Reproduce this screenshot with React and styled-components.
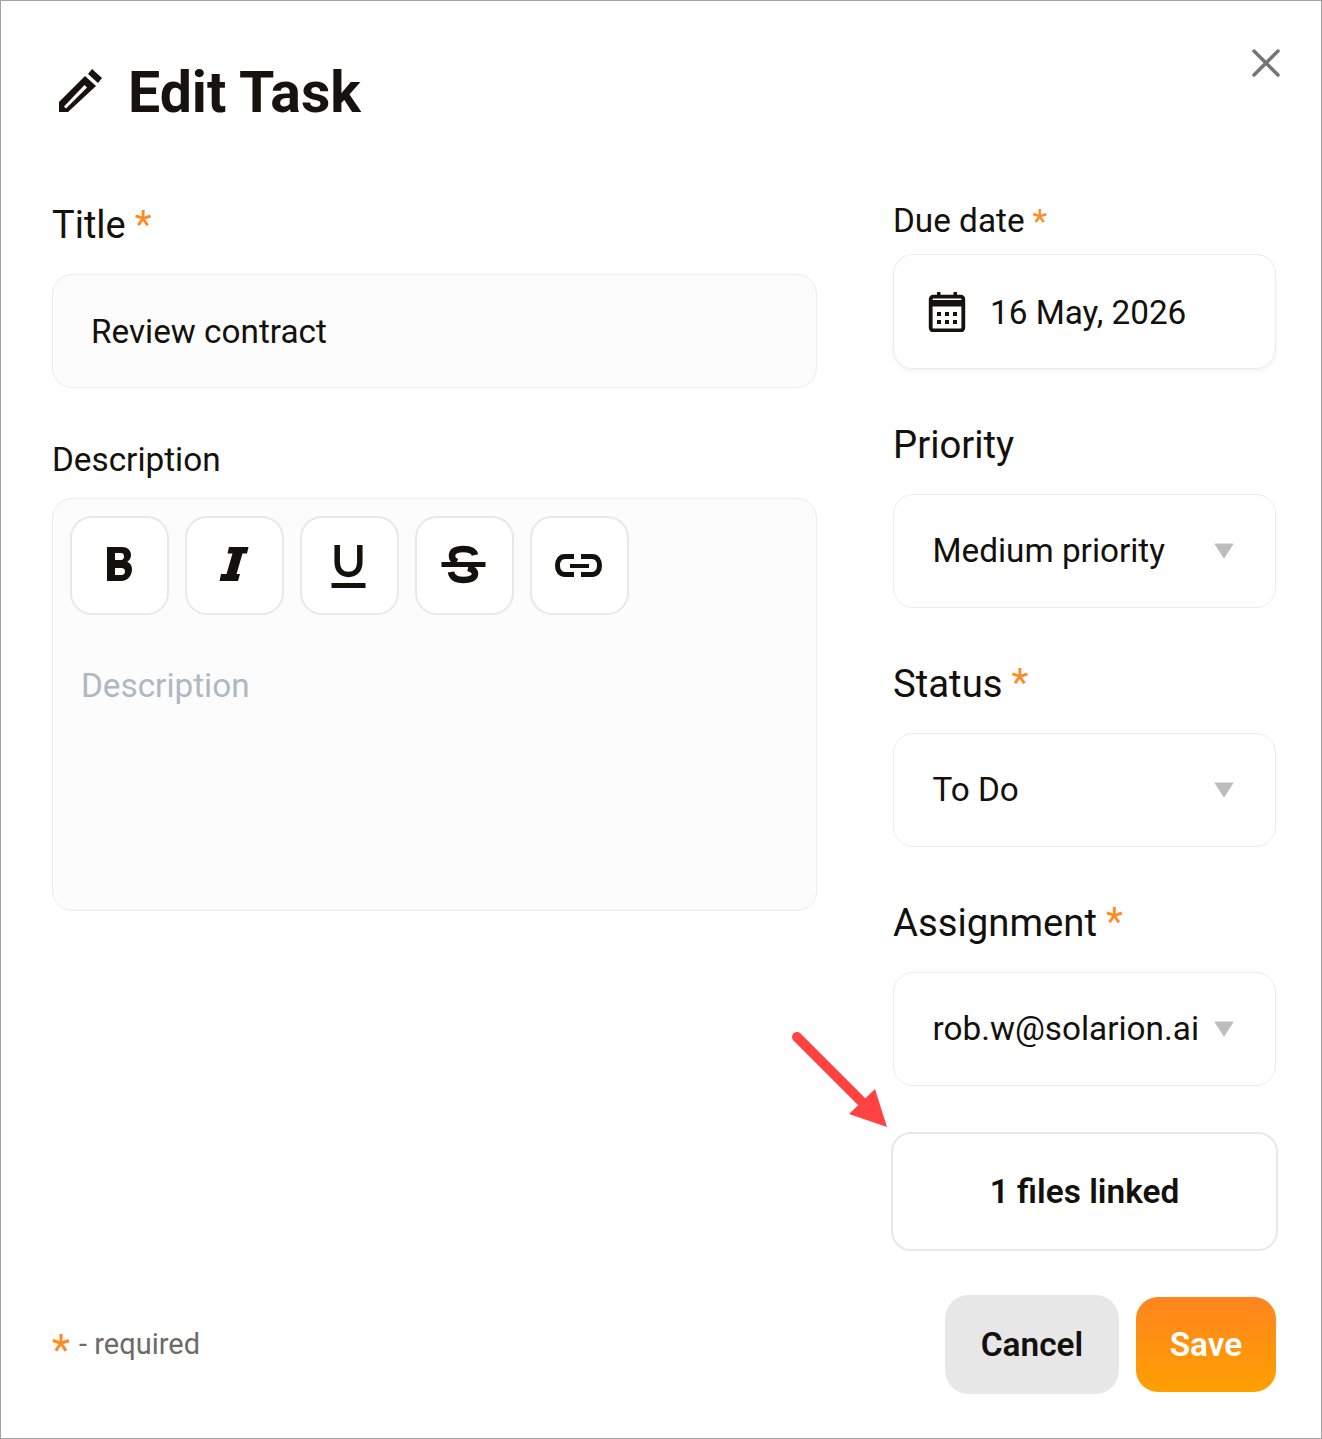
import React from 'react';
import styled, { createGlobalStyle } from 'styled-components';

const GlobalStyle = createGlobalStyle`
  * { box-sizing: border-box; }
  html, body { margin: 0; padding: 0; background: #fff; }
  body { font-family: Roboto, "Liberation Sans", sans-serif; color: #14100c; }
`;

const Modal = styled.div`
  position: relative;
  width: 1322px;
  height: 1439px;
  padding: 50px 45px 0 51px;
  background: #fff;
  border: 1px solid #a3a3a3;
`;

const CloseButton = styled.button`
  position: absolute;
  top: 46px;
  right: 39px;
  width: 32px;
  height: 32px;
  padding: 0;
  border: 0;
  background: none;
  display: flex;
`;

const Header = styled.header`
  display: flex;
  align-items: center;
  gap: 24px;
  height: 80px;
  padding-left: 6px;
  margin-bottom: 69px;
`;

const Heading = styled.h1`
  margin: 2px 0 0;
  font-size: 57.2px;
  font-weight: 700;
  color: #17120d;
`;

const Columns = styled.div`
  display: grid;
  grid-template-columns: 765px 383px;
  column-gap: 76px;
`;

const Column = styled.div`
  display: flex;
  flex-direction: column;
`;

const Label = styled.label`
  display: flex;
  align-items: center;
  gap: ${(p) => p.$gap || 9}px;
  height: ${(p) => p.$height}px;
  padding-bottom: ${(p) => (p.$lift ? 1 : 0)}px;
  margin-top: ${(p) => p.$top || 0}px;
  margin-bottom: ${(p) => p.$bottom}px;
  font-size: ${(p) => p.$size}px;
  font-weight: 400;
`;

const Star = styled.span`
  color: #ff8a1f;
  font-size: ${(p) => p.$size || 39}px;
  line-height: 1;
  margin-top: ${(p) => p.$shift ?? 0}px;
`;

const TitleInput = styled.input`
  display: block;
  width: 100%;
  height: 114px;
  padding: 1px 38px 0;
  font: 400 33.3px Roboto, sans-serif;
  color: #14100c;
  background: #fcfcfc;
  border: 1px solid #ececec;
  border-radius: 20px;
  outline: none;
`;

const Editor = styled.div`
  height: 413px;
  padding: 17px 17px 0 16.5px;
  background: #fcfcfc;
  border: 1px solid #ececec;
  border-radius: 20px;
  display: flex;
  flex-direction: column;
`;

const Toolbar = styled.div`
  display: flex;
  gap: 16px;
`;

const ToolButton = styled.button`
  width: 99px;
  height: 99px;
  padding: 0;
  display: flex;
  align-items: center;
  justify-content: center;
  background: #fff;
  border: 2px solid #e8e8e8;
  border-radius: 22px;
`;

const DescriptionArea = styled.textarea`
  flex: 1;
  margin-top: 52px;
  padding: 0 0 0 11.5px;
  border: 0;
  resize: none;
  outline: none;
  background: transparent;
  font: 400 33.3px Roboto, sans-serif;
  line-height: 38px;
  &::placeholder {
    color: #aeb8c4;
    opacity: 1;
  }
`;

const Control = styled.div`
  display: flex;
  align-items: center;
  height: ${(p) => p.$height || 114}px;
  padding: 0 41px 1px 38.5px;
  font-size: 33.3px;
  background: #fff;
  border: 1px solid #ececec;
  border-radius: 20px;
  box-shadow: ${(p) => (p.$raised ? '0 2px 4px rgba(0, 0, 0, 0.05)' : 'none')};
`;

const DateControl = styled(Control)`
  padding: 0 41px 0 34px;
  gap: 24px;
`;

const DateValue = styled.span`
  margin-top: 2px;
`;

const SelectValue = styled.span`
  flex: 1;
  white-space: nowrap;
`;

const Caret = styled.svg`
  width: 20px;
  height: 16px;
  flex: none;
  margin-top: 1px;
`;

const FilesButton = styled.button`
  display: block;
  width: 387px;
  height: 119px;
  margin: 46px -2px 0;
  font: 600 33.4px Roboto, sans-serif;
  color: #14100c;
  background: #fff;
  border: 2px solid #e8e8e8;
  border-radius: 20px;
`;

const Footer = styled.footer`
  display: flex;
  align-items: center;
  justify-content: space-between;
  height: 99px;
  margin-top: 44px;
`;

const RequiredNote = styled.div`
  display: flex;
  align-items: center;
  gap: 9px;
  padding-bottom: 2px;
  font-size: 29px;
  color: #6f6a66;
`;

const Actions = styled.div`
  display: flex;
  align-items: center;
  gap: 17px;
`;

const CancelButton = styled.button`
  width: 174px;
  height: 99px;
  font: 600 33.4px Roboto, sans-serif;
  color: #14100c;
  background: #e7e7e7;
  border: 0;
  border-radius: 24px;
`;

const SaveButton = styled.button`
  width: 140px;
  height: 95px;
  font: 600 33.4px Roboto, sans-serif;
  color: #fff;
  background: linear-gradient(180deg, #ff851f 0%, #ff9f00 100%);
  border: 0;
  border-radius: 22px;
`;

const Arrow = styled.svg`
  position: absolute;
  left: 789px;
  top: 1029px;
  width: 100px;
  height: 100px;
`;

const PencilIcon = () => (
  <svg width="46" height="44" viewBox="0 0 46 44">
    <path
      fill="#17120d"
      fillRule="evenodd"
      d="M34 0l10 9-4 5-10-9zM27 7l11 10-28 26H1V33zM6 37.5l2 2L29 18.5l-2.5-2.5z"
    />
  </svg>
);

const CalendarIcon = () => (
  <svg width="38" height="40" viewBox="0 0 38 40" style={{ flex: 'none' }}>
    <path fill="#17120d" d="M9 0h3.5v5H9zM25.5 0H29v5h-3.5z" />
    <rect x="2.7" y="4.7" width="32.6" height="33.6" rx="2.5" fill="none" stroke="#17120d" strokeWidth="3.8" />
    <path fill="#17120d" d="M2 8h34v6.500H2z" />
    <path
      fill="#17120d"
      d="M9 20h4v4H9zM17 20h4v4h-4zM25 20h4v4h-4zM9 28h4v4H9zM17 28h4v4h-4zM25 28h4v4h-4z"
    />
  </svg>
);

const toolIcons = {
  bold: (
    <path
      fill="#14100c"
      fillRule="evenodd"
      d="M18 6h15c5.500 0 9 3.300 9 8 0 3-1.400 5.300-3.800 6.700 3 1.300 4.800 3.900 4.800 7.300 0 6.800-4.500 12-10.500 12H18zM26 12v7h6c2 0 3-1.500 3-3.500S34 12 32 12zM26 27v7h6.500c2.200 0 3.500-1.400 3.500-3.500S34.700 27 32.500 27z"
    />
  ),
  italic: <path fill="#14100c" d="M25 6h19.500L43 12.500h-4.500L32.500 33H36l-2 7H15.500l1.500-7h5.500l6-20.500h-5z" />,
  underline: (
    <g>
      <path d="M18.200 4v17c0 8 4.500 12.500 11.300 12.500S40.800 29 40.800 21V4" fill="none" stroke="#14100c" strokeWidth="5.500" />
      <path fill="#14100c" d="M12.500 42h34v5h-34z" />
    </g>
  ),
  strike: (
    <g>
      <path
        d="M41 14c-1-4-5-6-11.500-6C23 8 18 10 18 15c0 3 2 5 5 6M34 27c5 1 7 3 7 6 0 4-5 6-11.500 6C23 39 18 37 17 31"
        fill="none"
        stroke="#14100c"
        strokeWidth="6.500"
      />
      <path fill="#14100c" d="M7.500 21h44v5h-44z" />
    </g>
  ),
  link: (
    <g fill="none" stroke="#14100c" strokeWidth="5">
      <path d="M25 15.500h-9c-5 0-7.500 3.500-7.500 9s2.500 9 7.500 9h9" />
      <path d="M32 15.500h11c5 0 7.500 3.500 7.500 9s-2.500 9-7.500 9H32" />
      <path d="M21 25h19" strokeWidth="4" />
    </g>
  ),
};

const ToolIcon = ({ name }) => (
  <svg width="60" height="50" viewBox="0 0 60 50">
    {toolIcons[name]}
  </svg>
);

const CaretIcon = () => (
  <Caret viewBox="0 0 20 16">
    <path fill="#bdbdbd" stroke="#bdbdbd" strokeWidth="1" strokeLinejoin="round" d="M1 1h18L10 15z" />
  </Caret>
);

const Select = ({ value }) => (
  <Control>
    <SelectValue>{value}</SelectValue>
    <CaretIcon />
  </Control>
);

export default function App() {
  return (
    <>
      <GlobalStyle />
      <Modal>
        <CloseButton type="button" aria-label="Close">
          <svg width="32" height="32" viewBox="0 0 32 32">
            <path d="M4 4l24 24M28 4L4 28" stroke="#757575" strokeWidth="3.500" strokeLinecap="round" />
          </svg>
        </CloseButton>

        <Header>
          <PencilIcon />
          <Heading>Edit Task</Heading>
        </Header>

        <Columns>
          <Column>
            <Label $height={50} $bottom={24} $size={38}>
              Title <Star>*</Star>
            </Label>
            <TitleInput defaultValue="Review contract" />
            <Label $height={44} $top={50} $bottom={16} $size={33.3} $lift>
              Description
            </Label>
            <Editor>
              <Toolbar>
                {Object.keys(toolIcons).map((name) => (
                  <ToolButton type="button" key={name}>
                    <ToolIcon name={name} />
                  </ToolButton>
                ))}
              </Toolbar>
              <DescriptionArea placeholder="Description" />
            </Editor>
          </Column>

          <Column>
            <Label $height={40} $bottom={14} $size={33.3} $gap={8}>
              Due date <Star $size={34} $shift={1}>*</Star>
            </Label>
            <DateControl $height={115} $raised>
              <CalendarIcon />
              <DateValue>16 May, 2026</DateValue>
            </DateControl>
            <Label $height={50} $top={51} $bottom={24} $size={38.3} $lift>
              Priority
            </Label>
            <Select value="Medium priority" />
            <Label $height={50} $top={51} $bottom={24} $size={38.3} $lift>
              Status <Star>*</Star>
            </Label>
            <Select value="To Do" />
            <Label $height={50} $top={51} $bottom={24} $size={38.3} $lift>
              Assignment <Star>*</Star>
            </Label>
            <Select value="rob.w@solarion.ai" />
            <FilesButton type="button">1 files linked</FilesButton>
          </Column>
        </Columns>

        <Footer>
          <RequiredNote>
            <Star $size={42} $shift={12}>*</Star>- required
          </RequiredNote>
          <Actions>
            <CancelButton type="button">Cancel</CancelButton>
            <SaveButton type="button">Save</SaveButton>
          </Actions>
        </Footer>

        <Arrow viewBox="0 0 100 100">
          <path d="M7 7l66 66" stroke="#ff4343" strokeWidth="10" strokeLinecap="round" />
          <path fill="#ff4343" d="M97 97L85 59 59 84z" />
        </Arrow>
      </Modal>
    </>
  );
}
